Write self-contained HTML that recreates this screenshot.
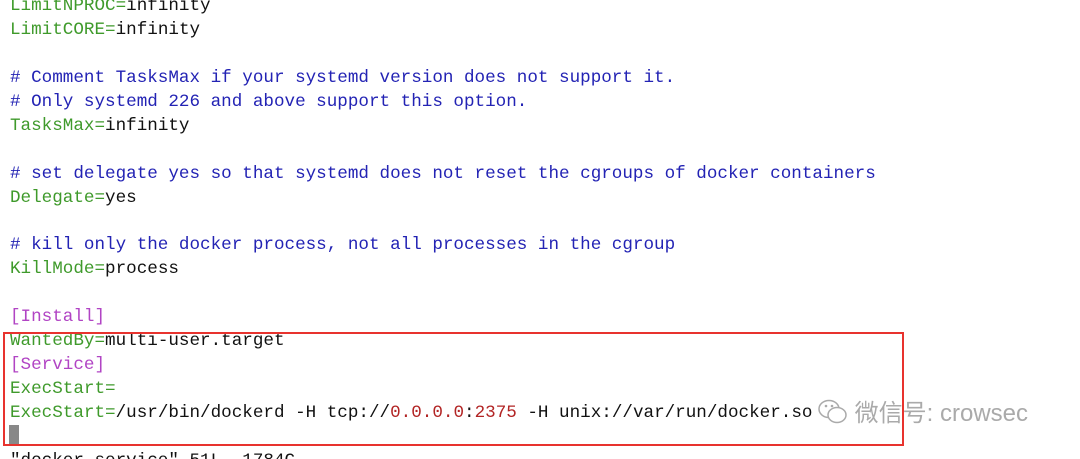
<!DOCTYPE html>
<html><head><meta charset="utf-8"><style>
html,body{margin:0;padding:0;background:#fff;width:1080px;height:459px;overflow:hidden;position:relative}
pre{position:absolute;left:10px;top:-5px;margin:0;font-family:"Liberation Mono",monospace;font-size:17.6px;line-height:23.93px;color:#111}
.c{color:#2323b4}.g{color:#3f9a2b}.m{color:#b144c4}.r{color:#b22424}
.box{position:absolute;left:3px;top:332px;width:897px;height:110px;border:2px solid #e8332e}
.cur{position:absolute;left:9px;top:425px;width:10px;height:19px;background:#888}
.wm{position:absolute;left:818px;top:393px;font-family:"Liberation Sans","Noto Sans CJK SC",sans-serif;font-size:24px;color:#aaa;white-space:nowrap}
</style></head><body>
<pre><span class="g">LimitNPROC=</span>infinity
<span class="g">LimitCORE=</span>infinity

<span class="c"># Comment TasksMax if your systemd version does not support it.</span>
<span class="c"># Only systemd 226 and above support this option.</span>
<span class="g">TasksMax=</span>infinity

<span class="c"># set delegate yes so that systemd does not reset the cgroups of docker containers</span>
<span class="g">Delegate=</span>yes

<span class="c"># kill only the docker process, not all processes in the cgroup</span>
<span class="g">KillMode=</span>process

<span class="m">[Install]</span>
<span class="g">WantedBy=</span>multi-user.target
<span class="m">[Service]</span>
<span class="g">ExecStart=</span>
<span class="g">ExecStart=</span>/usr/bin/dockerd -H tcp://<span class="r">0.0.0.0</span>:<span class="r">2375</span> -H unix://var/run/docker.so

"docker.service" 51L, 1784C</pre>
<div class="box"></div>
<div class="cur"></div>
<div class="wm"><svg width="30" height="28" viewBox="0 0 30 28" style="vertical-align:-5px"><ellipse cx="11" cy="11" rx="10" ry="8.5" fill="#fff" stroke="#aaa" stroke-width="1.5"/><ellipse cx="19" cy="17" rx="9" ry="7.5" fill="#fff" stroke="#aaa" stroke-width="1.5"/><circle cx="8" cy="8" r="1.3" fill="#aaa"/><circle cx="14" cy="8" r="1.3" fill="#aaa"/></svg> 微信号: crowsec</div>
</body></html>
